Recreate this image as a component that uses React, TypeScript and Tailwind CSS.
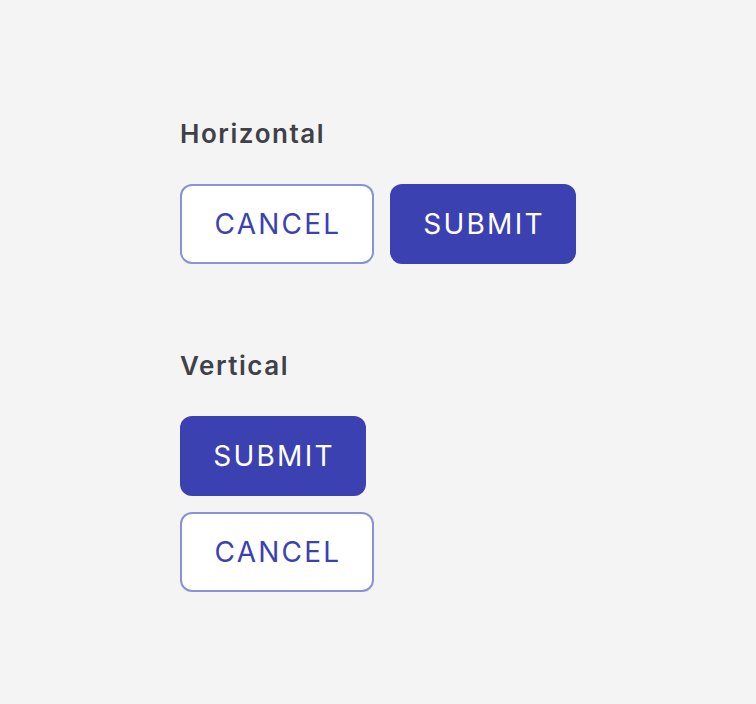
import React from "react";

const font = { fontFamily: "Inter, 'Open Sans', sans-serif" };

function Cancel() {
  return (
    <button className="h-[80px] w-[194px] rounded-[12px] border-2 border-[#8c90d9] bg-white pl-[2px] text-[28px] tracking-[0.08em] text-[#3b41b0]">
      CANCEL
    </button>
  );
}

function Submit() {
  return (
    <button className="h-[80px] w-[186px] rounded-[12px] bg-[#3b41b0] pl-[2px] text-[28px] tracking-[0.08em] text-white">
      SUBMIT
    </button>
  );
}

export default function App() {
  return (
    <div className="min-h-[704px] w-[756px] bg-[#f4f4f4] pl-[180px] pt-[116px]" style={font}>
      <h2 className="text-[26px] leading-[36px] font-semibold tracking-[0.06em] text-[#404048]">Horizontal</h2>
      <div className="mt-[32px] flex gap-[16px]">
        <Cancel />
        <Submit />
      </div>
      <h2 className="mt-[84px] text-[26px] leading-[36px] font-semibold tracking-[0.06em] text-[#404048]">Vertical</h2>
      <div className="mt-[32px] flex flex-col items-start gap-[16px]">
        <Submit />
        <Cancel />
      </div>
    </div>
  );
}
